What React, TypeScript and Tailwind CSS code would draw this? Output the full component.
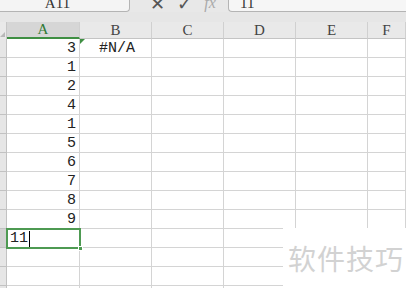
import React from 'react'

const cols = [
  { key: 'A', w: 'w-[73px]' },
  { key: 'B', w: 'w-[72px]' },
  { key: 'C', w: 'w-[72px]' },
  { key: 'D', w: 'w-[72px]' },
  { key: 'E', w: 'w-[72px]' },
  { key: 'F', w: 'flex-1' },
]

const values = ['3', '1', '2', '4', '1', '5', '6', '7', '8', '9', '11', '', '', '']

export default function App() {
  return (
    <div className="relative w-[406px] h-[288px] overflow-hidden bg-white font-['Liberation_Mono',monospace] text-[15px] text-[#222]">
      {/* Formula bar (scrolled, only the lower edge shows) */}
      <div className="flex h-[12px] bg-[#e8e8e8]">
        <div className="w-[130px] h-[12px] overflow-hidden bg-[#f4f4f4] border-r border-b border-[#b4b4b4] rounded-br-[4px] flex justify-center">
          <span className="-mt-[8px] pr-[14px] font-['Liberation_Serif',serif] text-[15px] text-[#333]">A11</span>
        </div>
        <div className="flex items-start gap-[12px] pl-[20px] w-[98px] h-[12px] overflow-hidden text-[#555]">
          <span className="-mt-[10px] text-[18px] font-['DejaVu_Sans',sans-serif]">✕</span>
          <span className="-mt-[10px] text-[18px] font-['DejaVu_Sans',sans-serif]">✓</span>
          <span className="-mt-[9px] text-[16px] italic text-[#aaa] font-['Liberation_Serif',serif]">fx</span>
        </div>
        <div className="flex-1 h-[12px] overflow-hidden bg-[#f6f6f6] border-l border-b border-[#b4b4b4] rounded-bl-[4px] pl-[11px]">
          <span className="block -mt-[8px] font-['Liberation_Serif',serif] text-[15px] text-[#333]">11</span>
        </div>
      </div>
      <div className="h-[10px] bg-[#e6e6e6]" />

      {/* Column headers */}
      <div className="flex h-[17px] bg-[#e9e9e9] font-['Liberation_Serif',serif] text-[15px] text-[#444]">
        <div className="w-[7px] border-r border-[#c6c6c6] relative">
          <div className="absolute right-[1px] bottom-[2px] w-0 h-0 border-l-[5px] border-l-transparent border-b-[5px] border-b-[#b8b8b8]" />
        </div>
        {cols.map((c) => (
          <div
            key={c.key}
            className={`${c.w} flex justify-center items-center leading-none border-r border-[#d0d0d0] ${
              c.key === 'A' ? 'bg-[#d6d6d6] border-b-2 border-b-[#3f8f43] text-[#2f7a35]' : 'border-b border-b-[#c4c4c4]'
            }`}
          >
            {c.key}
          </div>
        ))}
      </div>

      {/* Rows */}
      {values.map((v, i) => (
        <div key={i} className="flex h-[19px]">
          <div className={`w-[7px] border-r border-b border-[#c2c2c2] ${i === 10 ? 'bg-[#d2d2d2]' : 'bg-[#e6e6e6]'}`} />
          {cols.map((c) => (
            <div
              key={c.key}
              className={`${c.w} relative border-r border-b border-[#d4d4d4] flex items-center leading-none ${
                c.key === 'A' && i !== 10 ? 'justify-end pr-[3px]' : 'pl-[3px]'
              }`}
            >
              {c.key === 'A' && i !== 10 && v}
              {c.key === 'B' && i === 0 && (
                <>
                  <div className="absolute left-0 top-0 w-0 h-0 border-t-[5px] border-t-[#3f8f43] border-r-[5px] border-r-transparent" />
                  <span className="pl-[16px]">#N/A</span>
                </>
              )}
            </div>
          ))}
        </div>
      ))}

      {/* Active cell A11 */}
      <div className="absolute left-[6px] top-[228px] w-[75px] h-[21px] border-2 border-[#4e9a52] flex items-center pl-[2px] leading-none">
        <span>11</span>
        <span className="w-px h-[16px] bg-black ml-[1px]" />
        <div className="absolute -right-[4px] -bottom-[4px] w-[5px] h-[5px] bg-[#4e9a52] border border-white" />
      </div>

      {/* Watermark */}
      <div className="absolute left-[283px] top-[228px] right-0 bottom-0 bg-white pl-[5px] pt-[16px]">
        <span className="font-['Noto_Sans_CJK_SC',sans-serif] text-[28px] leading-none tracking-[1px] text-[#d2d2d2]">软件技巧</span>
      </div>
    </div>
  )
}
